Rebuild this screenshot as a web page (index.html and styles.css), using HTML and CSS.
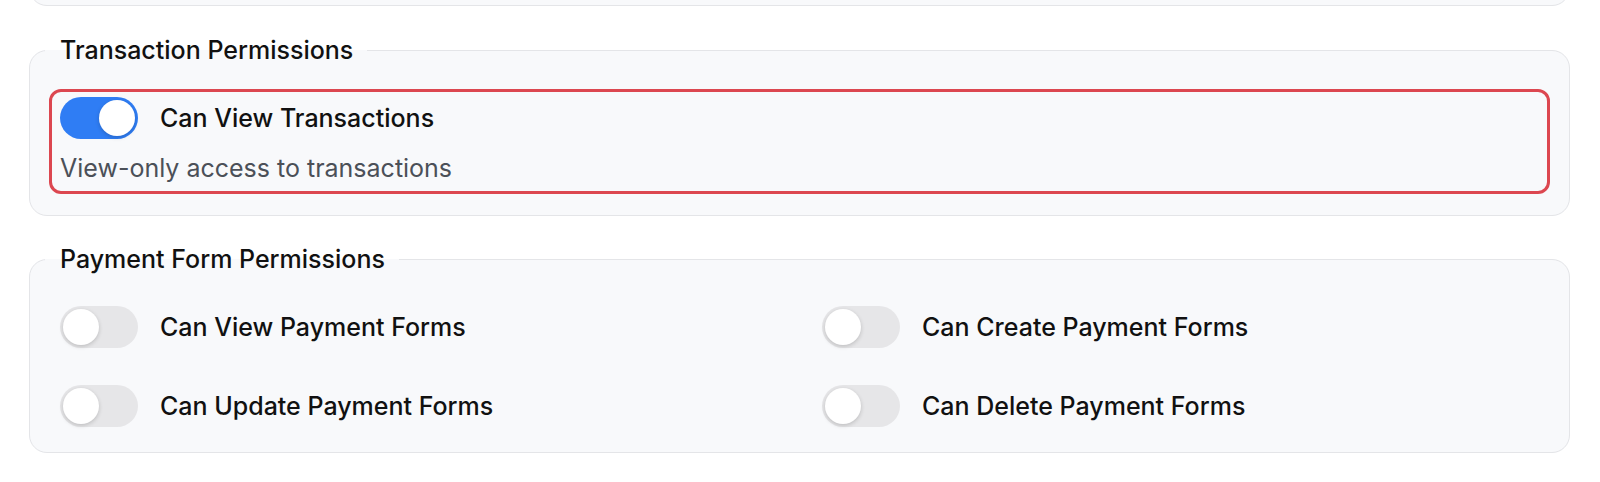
FILE: index.html
```html
<!DOCTYPE html>
<html lang="en">
<head>
    <meta charset="UTF-8">
    <meta name="viewport" content="width=device-width, initial-scale=1.0">
    <title>Role Permissions</title>
    <link rel="stylesheet" href="styles.css">
</head>
<body>
    <div class="container">
        <!-- tail of the section above, scrolled mostly out of view -->
        <fieldset class="group group-cut"></fieldset>

        <fieldset class="group group-single">
            <legend>Transaction Permissions</legend>
            <div class="perm highlight">
                <label class="perm-row">
                    <input type="checkbox" class="switch" checked>
                    <span class="perm-name">Can View Transactions</span>
                </label>
                <div class="perm-desc">View-only access to transactions</div>
            </div>
        </fieldset>

        <fieldset class="group">
            <legend>Payment Form Permissions</legend>
            <div class="perm-grid">
                <label class="perm-row">
                    <input type="checkbox" class="switch">
                    <span class="perm-name">Can View Payment Forms</span>
                </label>
                <label class="perm-row">
                    <input type="checkbox" class="switch">
                    <span class="perm-name">Can Create Payment Forms</span>
                </label>
                <label class="perm-row">
                    <input type="checkbox" class="switch">
                    <span class="perm-name">Can Update Payment Forms</span>
                </label>
                <label class="perm-row">
                    <input type="checkbox" class="switch">
                    <span class="perm-name">Can Delete Payment Forms</span>
                </label>
            </div>
        </fieldset>
    </div>
</body>
</html>
```

FILE: styles.css
```css
body {
    font-family: Inter, "Noto Sans", sans-serif;
    background-color: #ffffff;
    color: #111111;
    margin: 0;
    padding: 0;
}

.container {
    padding: 0 30px 0 29px;
}

.group {
    margin: 0 0 25px;
    padding: 27px 30px 25px;
    border: 1.5px solid #e4e5e8;
    border-radius: 18px;
    background-color: #f8f9fb;
    min-width: 0;
}

.group-cut {
    margin: -60px 0 26px;
    height: 66px;
    padding: 0;
    box-sizing: border-box;
}

.group-single {
    padding-top: 29px;
    padding-bottom: 26px;
}

legend {
    margin-left: -15px;
    padding: 0 14px 0 15px;
    font-size: 25px;
    font-weight: 500;
    line-height: 36px;
    color: #111111;
}

.perm.highlight {
    margin: -8px -11px -5px;
    padding: 5px 8px 5px;
    border: 3px solid #dc4750;
    border-radius: 12px;
}

.perm-row {
    display: flex;
    align-items: center;
    gap: 22px;
    cursor: pointer;
}

.perm-name {
    font-size: 25px;
    font-weight: 500;
    color: #111111;
}

.perm-desc {
    margin-top: 11px;
    font-size: 25px;
    line-height: 36px;
    color: #4b5058;
}

.perm-grid {
    display: grid;
    grid-template-columns: 1fr 1fr;
    column-gap: 45px;
    row-gap: 37px;
    padding-top: 2px;
}

.switch {
    appearance: none;
    position: relative;
    flex: none;
    width: 78px;
    height: 42px;
    margin: 0;
    border-radius: 21px;
    background-color: #e6e6e8;
    cursor: pointer;
}

.switch::before {
    content: "";
    position: absolute;
    top: 3px;
    left: 3px;
    width: 36px;
    height: 36px;
    border-radius: 50%;
    background-color: #ffffff;
    box-shadow: 0 1.5px 4px rgba(0, 0, 0, 0.18);
}

.switch:checked {
    background-color: #2f7df4;
}

.switch:checked::before {
    left: 39px;
}
```
